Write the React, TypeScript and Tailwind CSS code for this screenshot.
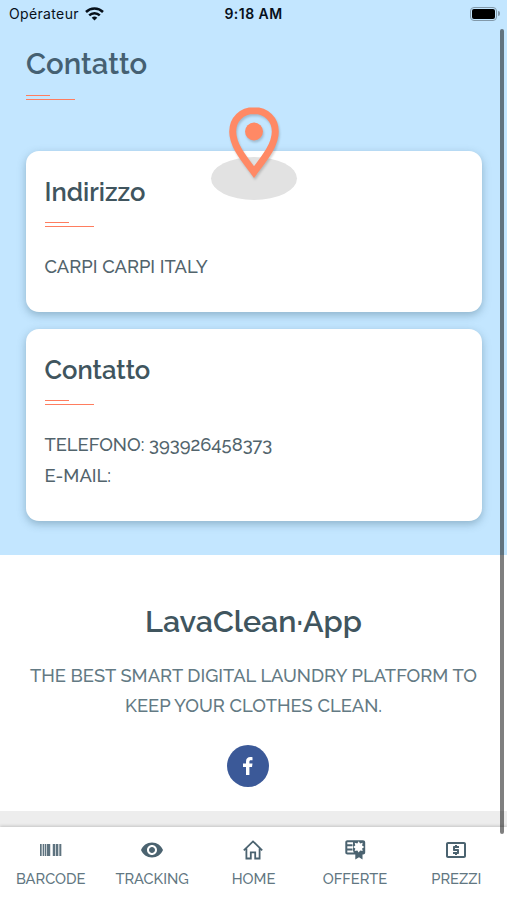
import React from 'react';
import { MdRemoveRedEye, MdLocalAtm } from 'react-icons/md';

const HomeIcon = () => (
  <svg width="24" height="24" viewBox="0 0 24 24" fill="none" stroke="currentColor" strokeWidth="1.8">
    <path d="M2.8 12.3 12 3.4l9.2 8.900M5.400 10.500V20.500H9.800V14.300h4.400v6.200h4.400V10.500" />
  </svg>
);

const BarcodeIcon = () => (
  <svg width="22" height="14" viewBox="0 0 22 14" fill="currentColor">
    <path d="M0 1h22v12H0z" opacity="0.3" />
    <path d="M0 1h1.500v12H0zM3 1h1v12H3zM5 1h1v12H5zM7 1h3v12H7zM13 1h2v12h-2zM16 1h2v12h-2zM19.500 1h1.500v12h-1.500z" opacity="0.85" />
    <path d="M10.700 1h1.600v12h-1.600z" fill="#fff" />
  </svg>
);

const CertificateIcon = () => (
  <svg width="24" height="24" viewBox="0 0 24 24">
    <path
      d="M12 15.500H4.500A1 1 0 0 1 3.300 14.500V4.300A1 1 0 0 1 4.500 3.200H20A1.200 1.200 0 0 1 21.200 4.300V14.500A1 1 0 0 1 20 15.500z"
      fill="none"
      stroke="currentColor"
      strokeWidth="2"
    />
    <path d="M3 7.300h6.500M3 11.500h6.500" stroke="currentColor" strokeWidth="1.900" />
    <path d="M10 3h11.500v12.500H11l-1-3zM12.300 14h7.200v7.500L16 19.300l-3.700 2.200z" fill="currentColor" />
    <path
      d="m15.700 3.200 1.400 2.200 2.600-.6-.6 2.600 2.200 1.500-2.200 1.500.6 2.600-2.600-.6-1.400 2.200-1.400-2.200-2.600.6.600-2.600-2.200-1.500 2.200-1.500-.6-2.600 2.600.6z"
      fill="#fff"
    />
  </svg>
);

const FacebookIcon = () => (
  <svg width="20" height="20" viewBox="0 0 20 20" fill="currentColor">
    <path d="M8 19V11H5V7.600h3V5.500C8 2.500 9.700 1 12.300 1c1 0 1.800.1 2.200.2v3h-1.600c-1.200 0-1.500.6-1.500 1.500v1.900h3.100L14 11h-2.600v8z" />
  </svg>
);

const WifiIcon = () => (
  <svg width="19" height="14" viewBox="0 0 19 14" fill="none" stroke="#07101a" strokeWidth="2.500">
    <path d="M1 5a12.200 12.200 0 0 1 17 0M4.200 8.400a7.600 7.600 0 0 1 10.600 0" />
    <path d="M9.500 13.500 6.700 10.800a4 4 0 0 1 5.600 0z" fill="#07101a" stroke="none" />
  </svg>
);

const MapPin = () => (
  <svg width="90" height="100" viewBox="0 0 90 100" className="drop-shadow-[1px_2px_1px_rgba(0,0,0,0.18)]">
    <path
      d="M45 5.500C32.800 5.500 23.700 14.500 23.700 26.500c0 13.500 10.600 26.500 21.300 40.600C55.700 53 66.300 40 66.300 26.500 66.300 14.500 57.200 5.500 45 5.500z"
      fill="none"
      stroke="#ff8965"
      strokeWidth="7"
    />
    <circle cx="45" cy="26.500" r="9" fill="#ff8965" />
  </svg>
);

const Underline = () => (
  <div className="flex flex-col gap-[3px]">
    <div className="h-px w-6 bg-[#ff7d5f]" />
    <div className="h-px w-[49px] bg-[#ff7d5f]" />
  </div>
);

interface InfoCardProps {
  title: string;
  className: string;
  children: React.ReactNode;
}

const InfoCard: React.FC<InfoCardProps> = ({ title, className, children }) => (
  <section
    className={`rounded-[13px] bg-white px-[18.5px] shadow-[0_3px_8px_rgba(40,80,100,0.35)] ${className}`}
  >
    <h2 className="pt-6 text-[25.6px] leading-[34px] font-semibold text-[#40555e]">{title}</h2>
    <div className="pt-[13px]">
      <Underline />
    </div>
    <div className="pt-[25px] text-[18.35px] leading-[30.5px] font-medium text-[#52646c]">{children}</div>
  </section>
);

const tabs = [
  { label: 'BARCODE', icon: <BarcodeIcon /> },
  { label: 'TRACKING', icon: <MdRemoveRedEye size={24} /> },
  { label: 'HOME', icon: <HomeIcon /> },
  { label: 'OFFERTE', icon: <CertificateIcon /> },
  { label: 'PREZZI', icon: <MdLocalAtm size={24} /> }
];

export default function App() {
  return (
    <div className="relative flex h-[900px] w-[507px] flex-col overflow-hidden bg-white font-['Raleway','Lato',sans-serif]">
      <div className="flex h-[555px] flex-col bg-[#c3e6ff]">
        <header className="grid h-[27px] grid-cols-3 items-center px-[9px] font-['Inter',sans-serif] text-[14px] text-[#07101a]">
          <div className="flex items-center gap-[6px] tracking-[0.35px]">
            Opérateur
            <WifiIcon />
          </div>
          <span className="text-center font-semibold tracking-[0.45px]">9:18 AM</span>
          <div className="-mr-[2px] flex items-center justify-end">
            <div className="h-[14px] w-[27px] rounded-[4px] border border-[#8299aa] p-[1px]">
              <div className="h-full rounded-[2px] bg-black" />
            </div>
            <div className="ml-px h-[5px] w-[2px] rounded-r-full bg-[#8299aa]" />
          </div>
        </header>

        <div className="h-[124px] px-[26px] pt-[18px]">
          <h1 className="text-[29.3px] leading-[38px] font-semibold text-[#456072]">Contatto</h1>
          <div className="pt-[12px]">
            <Underline />
          </div>
        </div>

        <div className="flex flex-col gap-[17px] pr-[25px] pl-[26px]">
          <InfoCard title="Indirizzo" className="h-[161px]">
            CARPI CARPI ITALY
          </InfoCard>
          <InfoCard title="Contatto" className="h-[192px]">
            <p>TELEFONO: 393926458373</p>
            <p>E-MAIL:</p>
          </InfoCard>
        </div>
      </div>

      <div className="flex h-64 flex-col items-center">
        <h2 className="pt-[46px] text-[30.5px] leading-10 font-semibold text-[#40555e]">LavaClean·App</h2>
        <p className="pt-5 text-center text-[18.35px] leading-[30px] font-medium whitespace-nowrap text-[#637a84]">
          THE BEST SMART DIGITAL LAUNDRY PLATFORM TO
          <br />
          KEEP YOUR CLOTHES CLEAN.
        </p>
        <a className="mt-6 mr-3 flex size-[42px] items-center justify-center rounded-full bg-[#3b5998] text-white">
          <FacebookIcon />
        </a>
      </div>

      <div className="h-4 bg-[#ededed]" />
      <nav className="grid grow grid-cols-5 bg-white shadow-[0_-1px_3px_rgba(0,0,0,0.18)]">
        {tabs.map((tab) => (
          <div key={tab.label} className="flex flex-col items-center pt-[11px] text-[#4b6370]">
            <div className="flex h-6 items-center">{tab.icon}</div>
            <span className="pt-[7px] text-[14.7px] leading-5 font-medium text-[#627782]">{tab.label}</span>
          </div>
        ))}
      </nav>

      {/* location marker straddles the first card's top edge */}
      <div className="absolute top-[157px] left-[211px] h-[43px] w-[86px] rounded-[50%] bg-[#e2e2e2]" />
      <div className="absolute top-[105px] left-[209px]">
        <MapPin />
      </div>
      <div className="absolute top-[29px] right-[3px] h-[805px] w-1 rounded-full bg-black/50" />
    </div>
  );
}
